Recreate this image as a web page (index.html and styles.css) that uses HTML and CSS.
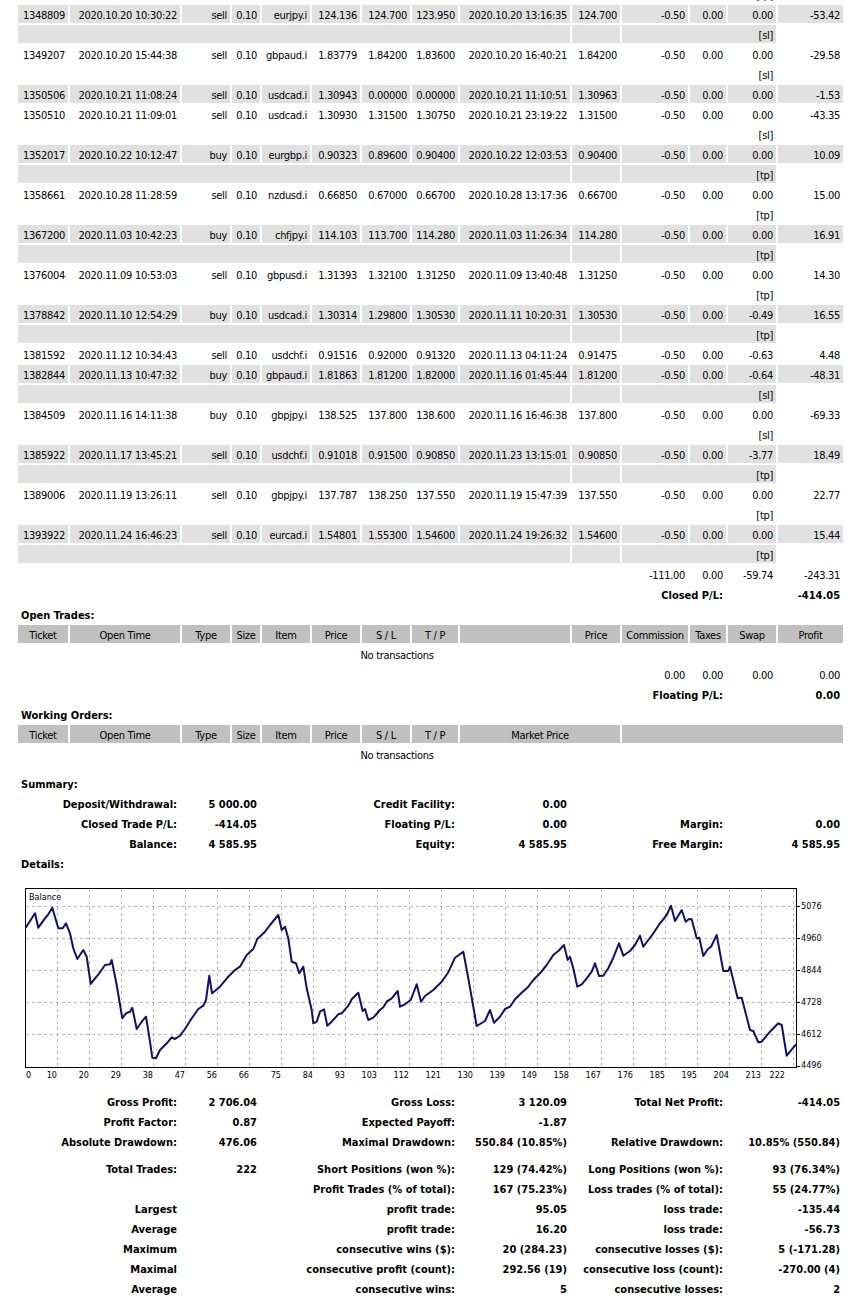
FILE: index.html
```html
<!DOCTYPE html>
<html>
<head>
<meta charset="utf-8">
<title>Statement</title>
<link rel="stylesheet" href="styles.css">
</head>
<body>
<table class="report">
<colgroup>
<col class="w-ticket"><col class="w-time"><col class="w-type"><col class="w-size"><col class="w-item"><col class="w-price"><col class="w-sl"><col class="w-tp"><col class="w-time"><col class="w-price"><col class="w-comm"><col class="w-tax"><col class="w-swap"><col class="w-profit">
</colgroup>
<tbody>
<tr><td colspan="9"></td><td></td><td colspan="3">[tp]</td></tr>

<tr class="g"><td>1348809</td><td>2020.10.20 10:30:22</td><td>sell</td><td>0.10</td><td>eurjpy.i</td><td>124.136</td><td>124.700</td><td>123.950</td><td>2020.10.20 13:16:35</td><td>124.700</td><td>-0.50</td><td>0.00</td><td>0.00</td><td>-53.42</td></tr>
<tr class="g"><td colspan="9"></td><td></td><td colspan="3">[sl]</td></tr>
<tr><td>1349207</td><td>2020.10.20 15:44:38</td><td>sell</td><td>0.10</td><td>gbpaud.i</td><td>1.83779</td><td>1.84200</td><td>1.83600</td><td>2020.10.20 16:40:21</td><td>1.84200</td><td>-0.50</td><td>0.00</td><td>0.00</td><td>-29.58</td></tr>
<tr><td colspan="9"></td><td></td><td colspan="3">[sl]</td></tr>
<tr class="g"><td>1350506</td><td>2020.10.21 11:08:24</td><td>sell</td><td>0.10</td><td>usdcad.i</td><td>1.30943</td><td>0.00000</td><td>0.00000</td><td>2020.10.21 11:10:51</td><td>1.30963</td><td>-0.50</td><td>0.00</td><td>0.00</td><td>-1.53</td></tr>
<tr><td>1350510</td><td>2020.10.21 11:09:01</td><td>sell</td><td>0.10</td><td>usdcad.i</td><td>1.30930</td><td>1.31500</td><td>1.30750</td><td>2020.10.21 23:19:22</td><td>1.31500</td><td>-0.50</td><td>0.00</td><td>0.00</td><td>-43.35</td></tr>
<tr><td colspan="9"></td><td></td><td colspan="3">[sl]</td></tr>
<tr class="g"><td>1352017</td><td>2020.10.22 10:12:47</td><td>buy</td><td>0.10</td><td>eurgbp.i</td><td>0.90323</td><td>0.89600</td><td>0.90400</td><td>2020.10.22 12:03:53</td><td>0.90400</td><td>-0.50</td><td>0.00</td><td>0.00</td><td>10.09</td></tr>
<tr class="g"><td colspan="9"></td><td></td><td colspan="3">[tp]</td></tr>
<tr><td>1358661</td><td>2020.10.28 11:28:59</td><td>sell</td><td>0.10</td><td>nzdusd.i</td><td>0.66850</td><td>0.67000</td><td>0.66700</td><td>2020.10.28 13:17:36</td><td>0.66700</td><td>-0.50</td><td>0.00</td><td>0.00</td><td>15.00</td></tr>
<tr><td colspan="9"></td><td></td><td colspan="3">[tp]</td></tr>
<tr class="g"><td>1367200</td><td>2020.11.03 10:42:23</td><td>buy</td><td>0.10</td><td>chfjpy.i</td><td>114.103</td><td>113.700</td><td>114.280</td><td>2020.11.03 11:26:34</td><td>114.280</td><td>-0.50</td><td>0.00</td><td>0.00</td><td>16.91</td></tr>
<tr class="g"><td colspan="9"></td><td></td><td colspan="3">[tp]</td></tr>
<tr><td>1376004</td><td>2020.11.09 10:53:03</td><td>sell</td><td>0.10</td><td>gbpusd.i</td><td>1.31393</td><td>1.32100</td><td>1.31250</td><td>2020.11.09 13:40:48</td><td>1.31250</td><td>-0.50</td><td>0.00</td><td>0.00</td><td>14.30</td></tr>
<tr><td colspan="9"></td><td></td><td colspan="3">[tp]</td></tr>
<tr class="g"><td>1378842</td><td>2020.11.10 12:54:29</td><td>buy</td><td>0.10</td><td>usdcad.i</td><td>1.30314</td><td>1.29800</td><td>1.30530</td><td>2020.11.11 10:20:31</td><td>1.30530</td><td>-0.50</td><td>0.00</td><td>-0.49</td><td>16.55</td></tr>
<tr class="g"><td colspan="9"></td><td></td><td colspan="3">[tp]</td></tr>
<tr><td>1381592</td><td>2020.11.12 10:34:43</td><td>sell</td><td>0.10</td><td>usdchf.i</td><td>0.91516</td><td>0.92000</td><td>0.91320</td><td>2020.11.13 04:11:24</td><td>0.91475</td><td>-0.50</td><td>0.00</td><td>-0.63</td><td>4.48</td></tr>
<tr class="g"><td>1382844</td><td>2020.11.13 10:47:32</td><td>buy</td><td>0.10</td><td>gbpaud.i</td><td>1.81863</td><td>1.81200</td><td>1.82000</td><td>2020.11.16 01:45:44</td><td>1.81200</td><td>-0.50</td><td>0.00</td><td>-0.64</td><td>-48.31</td></tr>
<tr class="g"><td colspan="9"></td><td></td><td colspan="3">[sl]</td></tr>
<tr><td>1384509</td><td>2020.11.16 14:11:38</td><td>buy</td><td>0.10</td><td>gbpjpy.i</td><td>138.525</td><td>137.800</td><td>138.600</td><td>2020.11.16 16:46:38</td><td>137.800</td><td>-0.50</td><td>0.00</td><td>0.00</td><td>-69.33</td></tr>
<tr><td colspan="9"></td><td></td><td colspan="3">[sl]</td></tr>
<tr class="g"><td>1385922</td><td>2020.11.17 13:45:21</td><td>sell</td><td>0.10</td><td>usdchf.i</td><td>0.91018</td><td>0.91500</td><td>0.90850</td><td>2020.11.23 13:15:01</td><td>0.90850</td><td>-0.50</td><td>0.00</td><td>-3.77</td><td>18.49</td></tr>
<tr class="g"><td colspan="9"></td><td></td><td colspan="3">[tp]</td></tr>
<tr><td>1389006</td><td>2020.11.19 13:26:11</td><td>sell</td><td>0.10</td><td>gbpjpy.i</td><td>137.787</td><td>138.250</td><td>137.550</td><td>2020.11.19 15:47:39</td><td>137.550</td><td>-0.50</td><td>0.00</td><td>0.00</td><td>22.77</td></tr>
<tr><td colspan="9"></td><td></td><td colspan="3">[tp]</td></tr>
<tr class="g"><td>1393922</td><td>2020.11.24 16:46:23</td><td>sell</td><td>0.10</td><td>eurcad.i</td><td>1.54801</td><td>1.55300</td><td>1.54600</td><td>2020.11.24 19:26:32</td><td>1.54600</td><td>-0.50</td><td>0.00</td><td>0.00</td><td>15.44</td></tr>
<tr class="g"><td colspan="9"></td><td></td><td colspan="3">[tp]</td></tr>
<tr><td colspan="10"></td><td>-111.00</td><td>0.00</td><td>-59.74</td><td>-243.31</td></tr>
<tr class="bold"><td colspan="10"></td><td colspan="2">Closed P/L:</td><td colspan="2">-414.05</td></tr>

<tr class="bold"><td colspan="14" class="left">Open Trades:</td></tr>
<tr class="h"><td>Ticket</td><td>Open Time</td><td>Type</td><td>Size</td><td>Item</td><td>Price</td><td>S / L</td><td>T / P</td><td></td><td>Price</td><td>Commission</td><td>Taxes</td><td>Swap</td><td>Profit</td></tr>
<tr><td colspan="13" class="center">No transactions</td></tr>
<tr><td colspan="10"></td><td>0.00</td><td>0.00</td><td>0.00</td><td>0.00</td></tr>
<tr class="bold"><td colspan="10"></td><td colspan="2">Floating P/L:</td><td colspan="2">0.00</td></tr>

<tr class="bold"><td colspan="14" class="left">Working Orders:</td></tr>
<tr class="h"><td>Ticket</td><td>Open Time</td><td>Type</td><td>Size</td><td>Item</td><td>Price</td><td>S / L</td><td>T / P</td><td colspan="2">Market Price</td><td colspan="4"></td></tr>
<tr><td colspan="13" class="center">No transactions</td></tr>
<tr class="spacer s7"><td colspan="14"></td></tr>

<tr class="bold"><td colspan="14" class="left">Summary:</td></tr>
<tr class="bold"><td colspan="2">Deposit/Withdrawal:</td><td colspan="2">5 000.00</td><td colspan="4">Credit Facility:</td><td>0.00</td><td colspan="3"></td><td colspan="2"></td></tr>
<tr class="bold"><td colspan="2">Closed Trade P/L:</td><td colspan="2">-414.05</td><td colspan="4">Floating P/L:</td><td>0.00</td><td colspan="3">Margin:</td><td colspan="2">0.00</td></tr>
<tr class="bold"><td colspan="2">Balance:</td><td colspan="2">4 585.95</td><td colspan="4">Equity:</td><td>4 585.95</td><td colspan="3">Free Margin:</td><td colspan="2">4 585.95</td></tr>

<tr class="bold"><td colspan="14" class="left">Details:</td></tr>
<tr class="chart-row"><td colspan="14">
<svg class="chart" width="825" height="216" viewBox="18 874 825 216" xmlns="http://www.w3.org/2000/svg">
<rect x="25.5" y="888.5" width="771" height="179" fill="#ffffff" stroke="#000000" stroke-width="1"/>
<path class="grid" d="M26 906.5H796M26 938.5H796M26 970.5H796M26 1002.5H796M26 1034.5H796M57.5 889V1067M89.5 889V1067M121.5 889V1067M153.5 889V1067M185.5 889V1067M217.5 889V1067M249.5 889V1067M281.5 889V1067M313.5 889V1067M345.5 889V1067M377.5 889V1067M409.5 889V1067M441.5 889V1067M473.5 889V1067M505.5 889V1067M537.5 889V1067M569.5 889V1067M601.5 889V1067M633.5 889V1067M665.5 889V1067M697.5 889V1067M729.5 889V1067M761.5 889V1067M793.5 889V1067"/>
<path class="tick" d="M797 906.5H800M797 938.5H800M797 970.5H800M797 1002.5H800M797 1034.5H800M797 1066.5H800"/>
<text class="lbl" x="29" y="899.5">Balance</text>
<polyline class="line" points="25.7,927.7 35,913.3 38.3,927.7 45,918.3 48.3,914.3 52.3,907.7 58.3,928.3 62.7,928.3 66,923.3 70,933.3 73.3,948.3 77.3,959 83.3,950 86.7,956.7 90.7,984 95,978.3 99.3,973.3 105,965 110,964.3 111.7,960 116.7,985 122.3,1018.3 126,1013.3 130,1011.7 132.3,1007.7 136.7,1029 141.7,1021.7 146,1016.7 150,1041.7 152.3,1057.7 156,1058.3 160,1050 166.7,1043.3 171.7,1037.3 175,1039 180,1035.7 185,1029 191.7,1018.3 198.3,1009 203.3,1005.7 206,1000 209.3,975.7 212,993.3 220,986.7 228.3,976.7 235,970 240,966.7 246.7,955 253.3,949 257.3,939 265,931.7 270,925 278.3,915 281.7,930 285,926.7 288.3,938.3 291.7,961.7 296,963.3 299.3,973.3 303.3,966.7 306.7,988.3 311.7,1010 313.3,1023.3 316.7,1021.7 320,1011.7 324,1009.3 327.3,1025.7 331.7,1021.7 338.3,1014.3 341.7,1013.3 348.3,1005.7 351.7,999.3 358.3,992.7 362.7,1011 365,1009 368.3,1020 373.3,1017.7 380,1010 383.3,1007.3 386.7,1001.7 391.7,998.3 397.7,991 400,1006.7 405,1004.3 410.7,1000 416.7,984.3 421,1001.7 425,996 433.3,990 441.7,981.7 448.3,972.3 455,957.7 463.3,951.7 468.3,978.3 476.7,1026 485,1021 490,1010 494,1022.7 500,1016.7 505,1009 510,1006.7 515,999.3 521.7,992.7 528.3,986.7 533.3,980 540,973.3 546.7,965 553.3,955 558.3,951 564,945 567.7,960 570,956.7 573.3,968.3 577.3,986.7 581.7,984.3 586.7,978.3 591.7,971.7 595,963.3 599,976 603.3,975.7 608.3,968.3 613.3,957.7 619,943.3 623.3,955.7 630,951 635,945 640,935.7 643.3,946.7 648.3,940 651.7,935.7 660,923.3 666.7,915 671,905.7 675,921 681.7,910 685.7,921.7 689,919 691.7,919.3 696.7,938.3 699.3,937.7 703.3,956 707.7,949.3 711,946.7 716.7,935 723.3,971 728.3,971 730,966.7 737.7,998.3 741.7,997.7 750,1030 753.3,1031 758.3,1042.3 761.7,1041.7 770,1031.7 778.3,1023.3 781.7,1025 786.7,1055.7 790,1051.7 796,1044.3"/>
<g class="lbl">
<text x="801" y="908.5">5076</text>
<text x="801" y="940.5">4960</text>
<text x="801" y="972.5">4844</text>
<text x="801" y="1004.5">4728</text>
<text x="801" y="1036.5">4612</text>
<text x="801" y="1067.5">4496</text>
</g>
<g class="lbl">
<text x="26" y="1078">0</text>
</g>
<g class="lbl xl">
<text x="57" y="1078">10</text>
<text x="89" y="1078">20</text>
<text x="121" y="1078">29</text>
<text x="153" y="1078">38</text>
<text x="185" y="1078">47</text>
<text x="217" y="1078">56</text>
<text x="249" y="1078">66</text>
<text x="281" y="1078">75</text>
<text x="313" y="1078">84</text>
<text x="345" y="1078">93</text>
<text x="377" y="1078">103</text>
<text x="409" y="1078">112</text>
<text x="441" y="1078">121</text>
<text x="473" y="1078">130</text>
<text x="505" y="1078">139</text>
<text x="537" y="1078">149</text>
<text x="569" y="1078">158</text>
<text x="601" y="1078">167</text>
<text x="633" y="1078">176</text>
<text x="665" y="1078">185</text>
<text x="697" y="1078">195</text>
<text x="729" y="1078">204</text>
<text x="761" y="1078">213</text>
<text x="785" y="1078">222</text>
</g>
</svg>
</td></tr>

<tr class="bold"><td colspan="2">Gross Profit:</td><td colspan="2">2 706.04</td><td colspan="4">Gross Loss:</td><td>3 120.09</td><td colspan="3">Total Net Profit:</td><td colspan="2">-414.05</td></tr>
<tr class="bold"><td colspan="2">Profit Factor:</td><td colspan="2">0.87</td><td colspan="4">Expected Payoff:</td><td>-1.87</td><td colspan="3"></td><td colspan="2"></td></tr>
<tr class="bold"><td colspan="2">Absolute Drawdown:</td><td colspan="2">476.06</td><td colspan="4">Maximal Drawdown:</td><td>550.84 (10.85%)</td><td colspan="3">Relative Drawdown:</td><td colspan="2">10.85% (550.84)</td></tr>
<tr class="spacer s5"><td colspan="14"></td></tr>
<tr class="bold"><td colspan="2">Total Trades:</td><td colspan="2">222</td><td colspan="4">Short Positions (won %):</td><td>129 (74.42%)</td><td colspan="3">Long Positions (won %):</td><td colspan="2">93 (76.34%)</td></tr>
<tr class="bold"><td colspan="2"></td><td colspan="2"></td><td colspan="4">Profit Trades (% of total):</td><td>167 (75.23%)</td><td colspan="3">Loss trades (% of total):</td><td colspan="2">55 (24.77%)</td></tr>
<tr class="bold"><td colspan="2">Largest</td><td colspan="2"></td><td colspan="4">profit trade:</td><td>95.05</td><td colspan="3">loss trade:</td><td colspan="2">-135.44</td></tr>
<tr class="bold"><td colspan="2">Average</td><td colspan="2"></td><td colspan="4">profit trade:</td><td>16.20</td><td colspan="3">loss trade:</td><td colspan="2">-56.73</td></tr>
<tr class="bold"><td colspan="2">Maximum</td><td colspan="2"></td><td colspan="4">consecutive wins ($):</td><td>20 (284.23)</td><td colspan="3">consecutive losses ($):</td><td colspan="2">5 (-171.28)</td></tr>
<tr class="bold"><td colspan="2">Maximal</td><td colspan="2"></td><td colspan="4">consecutive profit (count):</td><td>292.56 (19)</td><td colspan="3">consecutive loss (count):</td><td colspan="2">-270.00 (4)</td></tr>
<tr class="bold"><td colspan="2">Average</td><td colspan="2"></td><td colspan="4">consecutive wins:</td><td>5</td><td colspan="3">consecutive losses:</td><td colspan="2">2</td></tr>
</tbody>
</table>
</body>
</html>
```

FILE: styles.css
```css
html, body {
  margin: 0;
  padding: 0;
  background: #ffffff;
}

body {
  font-family: "DejaVu Sans Condensed", "DejaVu Sans", sans-serif;
  font-stretch: condensed;
  font-size: 11px;
  color: #000000;
  overflow: hidden;
}

.report {
  margin: -17px 0 0 16px;
  width: 829px;
  table-layout: fixed;
  border-collapse: separate;
  border-spacing: 2px;
}

.w-ticket { width: 50px; }
.w-time { width: 110px; }
.w-type { width: 48px; }
.w-size { width: 28px; }
.w-item { width: 48px; }
.w-price { width: 48px; }
.w-sl { width: 48px; }
.w-tp { width: 46px; }
.w-comm { width: 66px; }
.w-tax { width: 36px; }
.w-swap { width: 48px; }
.w-profit { width: 65px; }

.report td {
  height: 14px;
  padding: 4px 3px 0;
  line-height: 14px;
  text-align: right;
  white-space: nowrap;
  overflow: visible;
  letter-spacing: -0.3px;
}

.report tr.g td { background: #e0e0e0; }

.report tr.h td {
  background: #c0c0c0;
  text-align: center;
}

.report tr.bold td {
  font-weight: bold;
  letter-spacing: 0;
}

.report td.left { text-align: left; }
.report td.center { text-align: center; }

.report tr.spacer td { padding: 0; line-height: 0; }
.report tr.s7 td { height: 7px; }
.report tr.s5 td { height: 5px; }

.report tr.chart-row td {
  height: 216px;
  padding: 0;
  line-height: 0;
  letter-spacing: 0;
}

.chart { display: block; }

.chart .grid {
  fill: none;
  stroke: #b8b8b8;
  stroke-width: 1;
  stroke-dasharray: 3 3;
}

.chart .tick {
  fill: none;
  stroke: #000000;
  stroke-width: 1;
}

.chart .line {
  fill: none;
  stroke: #10106a;
  stroke-width: 2;
  stroke-linejoin: round;
}

.chart .lbl {
  font-family: "DejaVu Sans Condensed", "DejaVu Sans", sans-serif;
  font-stretch: condensed;
  font-size: 9px;
  fill: #000000;
}

.chart .xl { text-anchor: end; }
```
